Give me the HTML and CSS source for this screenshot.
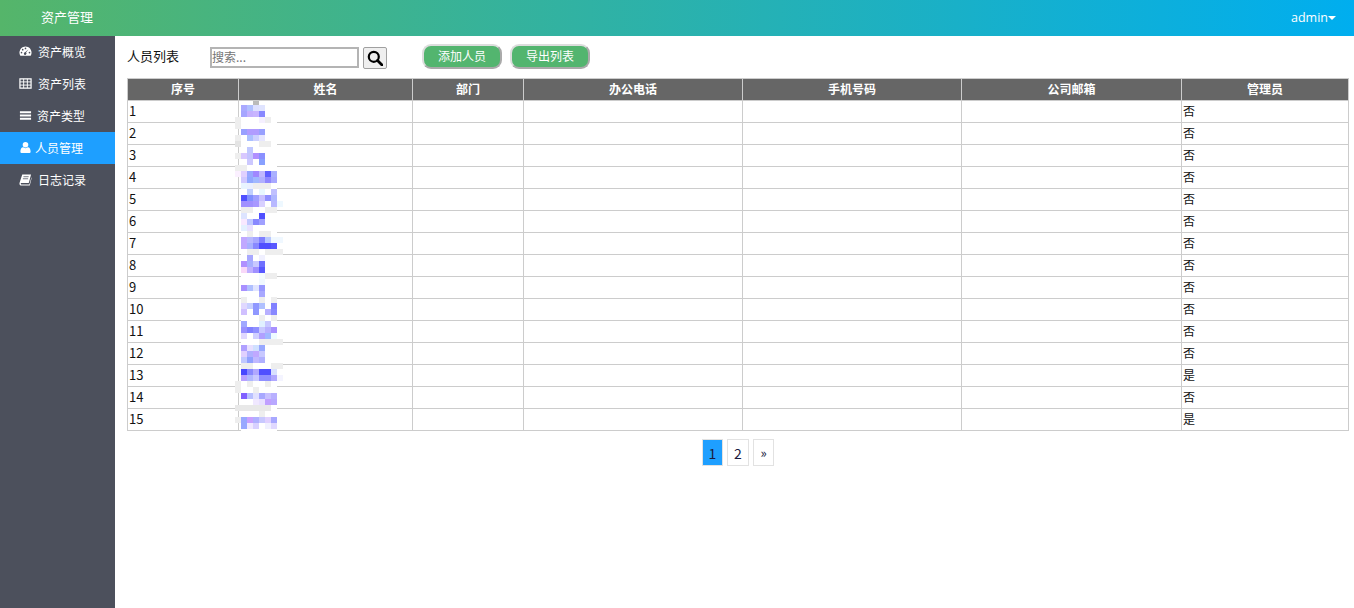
FILE: index.html
```html
<!DOCTYPE html>
<html lang="en">

<head>
    <meta charset="UTF-8">
    <meta name="viewport" content="width=device-width, initial-scale=1.0">
    <title>资产管理</title>
    <link rel="stylesheet" href="styles.css">
</head>

<body>
    <header class="topbar">
        <div class="brand">资产管理</div>
        <div class="user">admin<span class="caret"></span></div>
    </header>

    <div class="layout">
        <!-- sidebar -->
        <aside class="sidebar">
            <a class="nav-item">
                <svg class="nav-icon" viewBox="0 0 14 14"><path d="M7 1.500C3.300 1.500.5 4.600.5 8.300c0 1.300.3 2.300.9 3.200h11.200c.6-.9.900-1.900.9-3.200C13.500 4.600 10.700 1.500 7 1.500z" fill="#fff"/><circle cx="2.700" cy="8.300" r=".9" fill="#4c505c"/><circle cx="4" cy="5" r=".9" fill="#4c505c"/><circle cx="7" cy="3.700" r=".9" fill="#4c505c"/><circle cx="11.300" cy="8.300" r=".9" fill="#4c505c"/><path d="M10.300 4.500 7.600 8.200a1.400 1.400 0 1 1-1-.4z" fill="#4c505c"/></svg>
                <span>资产概览</span>
            </a>
            <a class="nav-item">
                <svg class="nav-icon" viewBox="0 0 14 14"><path d="M1 2h12v10H1z" fill="none" stroke="#fff" stroke-width="1.300"/><path d="M1 5.300h12M1 8.700h12M5 2v10M9 2v10" stroke="#fff" stroke-width="1"/></svg>
                <span>资产列表</span>
            </a>
            <a class="nav-item nav-types">
                <svg class="nav-icon" viewBox="0 0 14 14"><path d="M1 2.500h12v2H1zM1 6h12v2H1zM1 9.500h12v2H1z" fill="#fff"/></svg>
                <span>资产类型</span>
            </a>
            <a class="nav-item nav-people active">
                <svg class="nav-icon" viewBox="0 0 14 14"><circle cx="7" cy="4" r="3" fill="#fff"/><path d="M2.500 13c-.8 0-1-.6-1-1.300C1.500 9 2.500 6.800 4.500 6.800c.6.500 1.500.9 2.500.9s1.900-.4 2.500-.9c2 0 3 2.200 3 4.900 0 .7-.2 1.300-1 1.300z" fill="#fff"/></svg>
                <span>人员管理</span>
            </a>
            <a class="nav-item">
                <svg class="nav-icon" viewBox="0 0 14 14"><path d="M3.500 1.500H13l-2.500 9.300H2.800c-.8 0-.9.500-.9.800s.2.700.8.700h8.500l2.300-8v1.500l-1.900 7.700H2.500c-1.200 0-2-.9-2-2 0-.5.100-.9.300-1.500z" fill="#fff"/><path d="M4.800 4h5.600M4.200 6.200h5.600" stroke="#4c505c" stroke-width=".8"/></svg>
                <span>日志记录</span>
            </a>
        </aside>

        <main class="content">
            <div class="toolbar">
                <span class="page-title">人员列表</span>
                <input class="search-input" type="text" placeholder="搜索...">
                <button class="search-btn" type="button">
                    <svg viewBox="0 0 16 16" width="16" height="16"><circle cx="6.800" cy="6.800" r="5" fill="none" stroke="#000" stroke-width="2.200"/><path d="M10.500 10.500 15 15" stroke="#000" stroke-width="2.800" stroke-linecap="round"/></svg>
                </button>
                <button class="action-btn add-btn" type="button">添加人员</button>
                <button class="action-btn" type="button">导出列表</button>
            </div>

            <div class="table-wrap">
                <table class="people">
                    <colgroup>
                        <col class="col-no"><col class="col-name"><col class="col-dept"><col class="col-tel">
                        <col class="col-tel"><col class="col-mail"><col>
                    </colgroup>
                    <thead>
                        <tr><th>序号</th><th>姓名</th><th>部门</th><th>办公电话</th><th>手机号码</th><th>公司邮箱</th><th>管理员</th></tr>
                    </thead>
                    <tbody>
                        <tr><td>1</td><td></td><td></td><td></td><td></td><td></td><td>否</td></tr>
                        <tr><td>2</td><td></td><td></td><td></td><td></td><td></td><td>否</td></tr>
                        <tr><td>3</td><td></td><td></td><td></td><td></td><td></td><td>否</td></tr>
                        <tr><td>4</td><td></td><td></td><td></td><td></td><td></td><td>否</td></tr>
                        <tr><td>5</td><td></td><td></td><td></td><td></td><td></td><td>否</td></tr>
                        <tr><td>6</td><td></td><td></td><td></td><td></td><td></td><td>否</td></tr>
                        <tr><td>7</td><td></td><td></td><td></td><td></td><td></td><td>否</td></tr>
                        <tr><td>8</td><td></td><td></td><td></td><td></td><td></td><td>否</td></tr>
                        <tr><td>9</td><td></td><td></td><td></td><td></td><td></td><td>否</td></tr>
                        <tr><td>10</td><td></td><td></td><td></td><td></td><td></td><td>否</td></tr>
                        <tr><td>11</td><td></td><td></td><td></td><td></td><td></td><td>否</td></tr>
                        <tr><td>12</td><td></td><td></td><td></td><td></td><td></td><td>否</td></tr>
                        <tr><td>13</td><td></td><td></td><td></td><td></td><td></td><td>是</td></tr>
                        <tr><td>14</td><td></td><td></td><td></td><td></td><td></td><td>否</td></tr>
                        <tr><td>15</td><td></td><td></td><td></td><td></td><td></td><td>是</td></tr>
                    </tbody>
                </table>

                <!-- names are blurred out in the original -->
                <svg class="mosaic" viewBox="235 99 54 332" width="54" height="332" shape-rendering="crispEdges">
                    <rect x="241" y="101" width="36" height="330" fill="#fff"/>
                    <g fill="#eee"><rect x="235" y="117" width="6" height="12"/><rect x="265" y="117" width="6" height="6"/><rect x="235" y="135" width="6" height="6"/><rect x="235" y="141" width="6" height="6" fill="#e4e4e4"/><rect x="259" y="141" width="12" height="6"/><rect x="235" y="153" width="6" height="6"/><rect x="235" y="165" width="12" height="6"/><rect x="253" y="183" width="18" height="6"/><rect x="241" y="207" width="12" height="6"/><rect x="265" y="207" width="12" height="6"/><rect x="247" y="231" width="6" height="6"/><rect x="259" y="231" width="12" height="6"/><rect x="247" y="249" width="12" height="6"/><rect x="265" y="249" width="18" height="6"/><rect x="265" y="273" width="12" height="6"/><rect x="241" y="297" width="6" height="6"/><rect x="259" y="297" width="6" height="6"/><rect x="271" y="297" width="6" height="6"/><rect x="259" y="315" width="6" height="6"/><rect x="271" y="315" width="6" height="6"/><rect x="259" y="339" width="24" height="6"/><rect x="241" y="363" width="12" height="6"/><rect x="271" y="363" width="12" height="6"/><rect x="235" y="381" width="6" height="12"/><rect x="247" y="381" width="6" height="6"/><rect x="265" y="381" width="6" height="6"/><rect x="253" y="387" width="6" height="6"/><rect x="235" y="405" width="36" height="6" fill="#e8e8e8"/><rect x="259" y="411" width="6" height="6"/><rect x="235" y="417" width="6" height="6"/></g>
                    <rect x="253" y="101" width="6" height="4" fill="#bbb"/>
                    <rect x="241" y="105" width="6" height="6" fill="#a9a9ff"/><rect x="247" y="105" width="6" height="6" fill="#b0c0ff"/><rect x="253" y="105" width="6" height="6" fill="#dde0ff"/><rect x="259" y="105" width="6" height="6" fill="#e0e4ff"/>
                    <rect x="241" y="111" width="6" height="6" fill="#a5a5ff"/><rect x="247" y="111" width="6" height="6" fill="#c4b0ff"/><rect x="253" y="111" width="6" height="6" fill="#c8b4ff"/><rect x="259" y="111" width="6" height="6" fill="#8888ff"/><rect x="259" y="117" width="6" height="6" fill="#f5f0ff"/>
                    <rect x="241" y="129" width="6" height="6" fill="#98a0ff"/><rect x="247" y="129" width="6" height="6" fill="#b09cff"/><rect x="253" y="129" width="6" height="6" fill="#b09cff"/><rect x="259" y="129" width="6" height="6" fill="#98a0ff"/>
                    <rect x="247" y="135" width="6" height="6" fill="#aac0ff"/><rect x="253" y="135" width="6" height="6" fill="#ccd0ff"/><rect x="259" y="135" width="6" height="6" fill="#e6e6ff"/>
                    <rect x="247" y="147" width="6" height="6" fill="#c0c8ff"/><rect x="241" y="153" width="6" height="6" fill="#d8c8ff"/><rect x="247" y="153" width="6" height="6" fill="#c4c4ff"/><rect x="253" y="153" width="6" height="6" fill="#b090ff"/><rect x="259" y="153" width="6" height="6" fill="#8a90ff"/>
                    <rect x="247" y="159" width="6" height="6" fill="#ccc8ff"/><rect x="259" y="159" width="6" height="6" fill="#88a0ff"/>
                    <rect x="235" y="171" width="6" height="6" fill="#fbf0ff"/><rect x="241" y="171" width="6" height="6" fill="#e0d0ff"/><rect x="247" y="171" width="6" height="6" fill="#98a8ff"/><rect x="253" y="171" width="6" height="6" fill="#a088ff"/><rect x="259" y="171" width="6" height="6" fill="#c0b8ff"/><rect x="265" y="171" width="6" height="6" fill="#6060ff"/><rect x="271" y="171" width="6" height="6" fill="#aab0ff"/>
                    <rect x="241" y="177" width="6" height="6" fill="#d0c8ff"/><rect x="247" y="177" width="6" height="6" fill="#90a8ff"/><rect x="253" y="177" width="6" height="6" fill="#a0b8ff"/><rect x="259" y="177" width="6" height="6" fill="#b0b0ff"/><rect x="265" y="177" width="6" height="6" fill="#9088ff"/><rect x="271" y="177" width="6" height="6" fill="#a8a8ff"/>
                    <rect x="241" y="183" width="6" height="6" fill="#e8f4ff"/><rect x="247" y="183" width="6" height="6" fill="#eaf0ff"/>
                    <rect x="247" y="189" width="6" height="6" fill="#c0d0ff"/><rect x="259" y="189" width="6" height="6" fill="#e8f8ff"/><rect x="271" y="189" width="6" height="6" fill="#c0c0ff"/>
                    <rect x="241" y="195" width="6" height="6" fill="#5050ff"/><rect x="247" y="195" width="6" height="6" fill="#8090ff"/><rect x="253" y="195" width="6" height="6" fill="#a0a0ff"/><rect x="259" y="195" width="6" height="6" fill="#c8c0ff"/><rect x="265" y="195" width="6" height="6" fill="#9090ff"/><rect x="271" y="195" width="6" height="6" fill="#b0b8ff"/>
                    <rect x="241" y="201" width="6" height="6" fill="#a090ff"/><rect x="247" y="201" width="6" height="6" fill="#a090ff"/><rect x="253" y="201" width="6" height="6" fill="#a898ff"/><rect x="259" y="201" width="6" height="6" fill="#d8d0ff"/><rect x="271" y="201" width="6" height="6" fill="#b8b8ff"/><rect x="277" y="201" width="6" height="6" fill="#eef8ff"/>
                    <rect x="241" y="213" width="6" height="6" fill="#dde4ff"/><rect x="259" y="213" width="6" height="6" fill="#5050ff"/>
                    <rect x="241" y="219" width="6" height="6" fill="#f8e8ff"/><rect x="247" y="219" width="6" height="6" fill="#c0c8ff"/><rect x="253" y="219" width="6" height="6" fill="#8888ff"/><rect x="259" y="219" width="6" height="6" fill="#a0a0ff"/>
                    <rect x="241" y="225" width="6" height="6" fill="#e4f0ff"/><rect x="247" y="225" width="6" height="6" fill="#e8e0ff"/>
                    <rect x="241" y="237" width="6" height="6" fill="#c0a8ff"/><rect x="247" y="237" width="6" height="6" fill="#b8b8ff"/><rect x="253" y="237" width="6" height="6" fill="#a8a8ff"/><rect x="259" y="237" width="6" height="6" fill="#8080ff"/><rect x="265" y="237" width="6" height="6" fill="#b8c8ff"/><rect x="271" y="237" width="12" height="6" fill="#f0f8ff"/>
                    <rect x="241" y="243" width="6" height="6" fill="#c0a8ff"/><rect x="247" y="243" width="6" height="6" fill="#a8b0ff"/><rect x="253" y="243" width="6" height="6" fill="#8888ff"/><rect x="259" y="243" width="12" height="6" fill="#5050ff"/><rect x="271" y="243" width="6" height="6" fill="#5858ff"/>
                    <rect x="247" y="255" width="6" height="6" fill="#a8a8ff"/><rect x="259" y="255" width="6" height="6" fill="#f0f0ff"/>
                    <rect x="241" y="261" width="6" height="6" fill="#b090ff"/><rect x="247" y="261" width="6" height="6" fill="#a8b0ff"/><rect x="253" y="261" width="6" height="6" fill="#c8c8ff"/><rect x="259" y="261" width="6" height="6" fill="#7070ff"/>
                    <rect x="241" y="267" width="6" height="6" fill="#f8d8f8"/><rect x="247" y="267" width="6" height="6" fill="#c0b0ff"/><rect x="253" y="267" width="6" height="6" fill="#a090ff"/><rect x="259" y="267" width="6" height="6" fill="#5858ff"/>
                    <rect x="259" y="273" width="6" height="6" fill="#f4fbff"/><rect x="259" y="279" width="6" height="6" fill="#f0f8ff"/>
                    <rect x="241" y="285" width="6" height="6" fill="#a890ff"/><rect x="247" y="285" width="6" height="6" fill="#b0c0ff"/><rect x="253" y="285" width="6" height="6" fill="#e0e4ff"/><rect x="259" y="285" width="6" height="6" fill="#9898ff"/><rect x="259" y="291" width="6" height="6" fill="#a8a8ff"/>
                    <rect x="241" y="303" width="6" height="6" fill="#e0d8ff"/><rect x="247" y="303" width="6" height="6" fill="#c8d0ff"/><rect x="253" y="303" width="6" height="6" fill="#9098ff"/><rect x="259" y="303" width="6" height="6" fill="#b0c0ff"/><rect x="271" y="303" width="6" height="6" fill="#8080ff"/>
                    <rect x="241" y="309" width="6" height="6" fill="#d0c0ff"/><rect x="253" y="309" width="6" height="6" fill="#9098ff"/><rect x="265" y="309" width="6" height="6" fill="#b8b0ff"/><rect x="271" y="309" width="6" height="6" fill="#8888ff"/>
                    <rect x="241" y="321" width="6" height="6" fill="#a0a8ff"/><rect x="259" y="321" width="6" height="6" fill="#e0f0ff"/><rect x="265" y="321" width="6" height="6" fill="#c8c8ff"/>
                    <rect x="241" y="327" width="6" height="6" fill="#9890ff"/><rect x="247" y="327" width="6" height="6" fill="#8080ff"/><rect x="253" y="327" width="6" height="6" fill="#9090ff"/><rect x="259" y="327" width="6" height="6" fill="#c8c8ff"/><rect x="265" y="327" width="6" height="6" fill="#b8b0ff"/><rect x="271" y="327" width="6" height="6" fill="#a890ff"/>
                    <rect x="241" y="333" width="6" height="6" fill="#e0d8ff"/><rect x="253" y="333" width="6" height="6" fill="#d0d0ff"/><rect x="259" y="333" width="6" height="6" fill="#b0a0ff"/><rect x="265" y="333" width="6" height="6" fill="#a0b8ff"/><rect x="271" y="333" width="6" height="6" fill="#eefaff"/>
                    <rect x="241" y="345" width="6" height="6" fill="#b0a0ff"/><rect x="247" y="345" width="6" height="6" fill="#e8e0ff"/><rect x="253" y="345" width="6" height="6" fill="#d0e0ff"/><rect x="259" y="345" width="6" height="6" fill="#98a8ff"/>
                    <rect x="241" y="351" width="6" height="6" fill="#e0d0ff"/><rect x="247" y="351" width="6" height="6" fill="#b0b0ff"/><rect x="253" y="351" width="6" height="6" fill="#c0a8ff"/><rect x="259" y="351" width="6" height="6" fill="#c8c8ff"/>
                    <rect x="241" y="357" width="6" height="6" fill="#c0c8ff"/><rect x="247" y="357" width="6" height="6" fill="#90a0ff"/><rect x="253" y="357" width="6" height="6" fill="#c0b8ff"/><rect x="259" y="357" width="6" height="6" fill="#b0b0ff"/>
                    <rect x="241" y="369" width="6" height="6" fill="#4848ff"/><rect x="247" y="369" width="6" height="6" fill="#8888ff"/><rect x="253" y="369" width="6" height="6" fill="#b0a8ff"/><rect x="259" y="369" width="12" height="6" fill="#5050ff"/><rect x="271" y="369" width="6" height="6" fill="#d8e0ff"/>
                    <rect x="241" y="375" width="6" height="6" fill="#b8a0ff"/><rect x="247" y="375" width="6" height="6" fill="#b0b8ff"/><rect x="253" y="375" width="6" height="6" fill="#c8c8ff"/><rect x="259" y="375" width="12" height="6" fill="#9090ff"/><rect x="271" y="375" width="6" height="6" fill="#b0a8ff"/><rect x="277" y="375" width="6" height="6" fill="#f4f4ff"/>
                    <rect x="241" y="393" width="6" height="6" fill="#8060ff"/><rect x="247" y="393" width="6" height="6" fill="#b8c0ff"/><rect x="253" y="393" width="6" height="6" fill="#e0e0ff"/><rect x="259" y="393" width="6" height="6" fill="#a8a8ff"/><rect x="265" y="393" width="6" height="6" fill="#c8c0ff"/><rect x="271" y="393" width="6" height="6" fill="#b8b0ff"/>
                    <rect x="253" y="399" width="6" height="6" fill="#f0e8ff"/><rect x="259" y="399" width="6" height="6" fill="#e8e0ff"/><rect x="265" y="399" width="6" height="6" fill="#c0a0ff"/><rect x="271" y="399" width="6" height="6" fill="#b8a8ff"/>
                    <rect x="241" y="417" width="6" height="6" fill="#98a8ff"/><rect x="247" y="417" width="6" height="6" fill="#c8a0ff"/><rect x="253" y="417" width="6" height="6" fill="#b0b0ff"/><rect x="259" y="417" width="6" height="6" fill="#c8c8ff"/><rect x="265" y="417" width="6" height="6" fill="#e0d0ff"/><rect x="271" y="417" width="6" height="6" fill="#a8a8ff"/>
                    <rect x="241" y="423" width="6" height="6" fill="#98a8ff"/><rect x="247" y="423" width="6" height="6" fill="#f0e8ff"/><rect x="253" y="423" width="6" height="6" fill="#d8d0ff"/><rect x="265" y="423" width="6" height="6" fill="#f0f0ff"/><rect x="271" y="423" width="6" height="6" fill="#e0d8ff"/>
                </svg>
            </div>

            <div class="pager">
                <a class="page-link current">1</a>
                <a class="page-link">2</a>
                <a class="page-link page-next">»</a>
            </div>
        </main>
    </div>
</body>

</html>
```

FILE: styles.css
```css
* {
    padding: 0;
    margin: 0;
    box-sizing: border-box;
}

html,
body {
    height: 100%;
}

body {
    display: flex;
    flex-direction: column;
    font-family: "Noto Sans CJK SC", "Open Sans", sans-serif;
    font-size: 12px;
    color: #111;
    background-color: #fff;
}

.topbar {
    height: 36px;
    flex-shrink: 0;
    display: flex;
    justify-content: space-between;
    align-items: center;
    padding: 0 18px 3px 41px;
    font-size: 13px;
    color: #fff;
    background: linear-gradient(to right, #55b56a, #00aeef);
}

.user {
    display: flex;
    align-items: center;
    font-family: "Open Sans", sans-serif;
    font-size: 12.5px;
    padding-top: 1px;
}

.caret {
    margin-top: 1px;
    border-top: 4px solid #fff;
    border-left: 4px solid transparent;
    border-right: 4px solid transparent;
}

.layout {
    flex: 1;
    display: flex;
}

.sidebar {
    width: 115px;
    flex-shrink: 0;
    background-color: #4c505c;
}

.nav-item {
    height: 32px;
    display: flex;
    align-items: center;
    gap: 6px;
    padding: 0 0 2px 19px;
    color: #fff;
}

.nav-types {
    gap: 5px;
}

.nav-people {
    gap: 3px;
}

.nav-item.active {
    background-color: #1e9fff;
}

.nav-icon {
    width: 13px;
    height: 13px;
    flex-shrink: 0;
}

.content {
    flex: 1;
    min-width: 0;
    padding: 8px 5px 0 12px;
}

.toolbar {
    height: 25px;
    display: flex;
    align-items: flex-start;
}

.page-title {
    width: 83px;
    font-size: 13px;
    line-height: 24px;
}

.search-input {
    width: 149px;
    height: 21px;
    margin-top: 3px;
    padding: 0 0 2px;
    border: 2px solid #b4b4b4;
    font-family: inherit;
    font-size: 12px;
}

.search-input::placeholder {
    color: #757575;
}

.search-btn {
    width: 24px;
    height: 22px;
    margin: 3px 0 0 4px;
    display: flex;
    justify-content: center;
    align-items: center;
    background-color: #efefef;
    border: 1px solid #a0a0a0;
    border-radius: 2px;
}

.action-btn {
    width: 80px;
    height: 25px;
    margin-left: 8px;
    padding-bottom: 2px;
    color: #fff;
    font-family: inherit;
    font-size: 12px;
    background-color: #53b56f;
    border: 2px solid #aaa;
    border-top-color: #ddd;
    border-left-color: #ddd;
    border-radius: 9px;
}

.add-btn {
    margin-left: 35px;
}

.table-wrap {
    position: relative;
    margin-top: 9px;
}

.people {
    width: 100%;
    table-layout: fixed;
    border-collapse: collapse;
}

.col-no {
    width: 111px;
}

.col-name {
    width: 174px;
}

.col-dept {
    width: 111px;
}

.col-tel {
    width: 219px;
}

.col-mail {
    width: 220px;
}

.people th,
.people td {
    height: 22px;
    padding: 0 1px 2px;
    border: 1px solid #ccc;
    line-height: 18px;
}

.people th {
    color: #fff;
    font-weight: 700;
    background-color: #666;
}

.people td:first-child {
    font-size: 13px;
}

.mosaic {
    position: absolute;
    top: 21px;
    left: 108px;
}

.pager {
    display: flex;
    justify-content: center;
    gap: 4px;
    margin-top: 8px;
}

.page-link {
    height: 27px;
    width: 22px;
    display: flex;
    justify-content: center;
    align-items: center;
    border: 1px solid #e2e2e2;
    font-size: 14px;
    color: #1a1a40;
}

.page-link.current {
    width: 21px;
    background-color: #1e9fff;
}

.page-next {
    width: 21px;
    font-size: 13px;
}
```
